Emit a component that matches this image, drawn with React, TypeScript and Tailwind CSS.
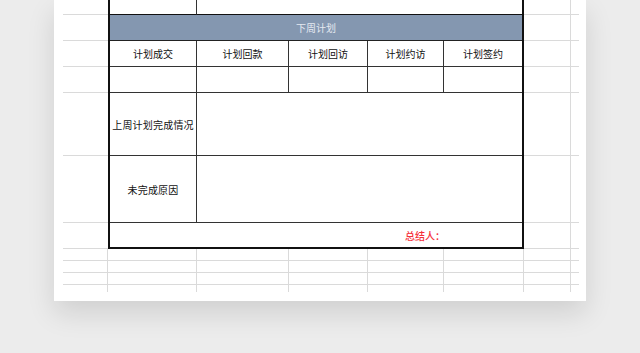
import React from "react";

// light spreadsheet gridlines around the report table
const gutterRows = [0, 1, 2, 3, 4, 5, 6];
const tailRows = [7, 8, 9, 10];

const headers = ["计划成交", "计划回款", "计划回访", "计划约访", "计划签约"];

function ReportTable() {
    return (
        <div className="col-start-2 col-span-5 row-start-1 row-span-7 border-x-2 border-b-2 border-[#111] grid grid-cols-[87px_92px_79px_76px_78px] grid-rows-[15px_26px_26px_26px_63px_67px_24px] text-[10px] text-[#111]">
            {/* top rows cut off by the viewport */}
            <div className="border-r border-b border-r-[#333] border-b-[#111]" />
            <div className="col-span-4 border-b border-[#111]" />

            <div className="col-span-5 bg-[#8497b0] border-b border-[#222] flex items-center justify-center text-[#e4e9f0]">
                下周计划
            </div>

            {headers.map((h, i) => (
                <div
                    key={h}
                    className={`flex items-center justify-center border-b border-[#333] ${i < 4 ? "border-r" : ""}`}
                >
                    {h}
                </div>
            ))}

            {headers.map((h, i) => (
                <div
                    key={h + "-v"}
                    className={`border-b border-[#333] ${i < 4 ? "border-r" : ""}`}
                />
            ))}

            <div className="flex items-center justify-center border-r border-b border-[#333] tracking-[0.2px]">
                上周计划完成情况
            </div>
            <div className="col-span-4 border-b border-[#333]" />

            <div className="flex items-center justify-center border-r border-b border-[#333] tracking-[0.2px]">
                未完成原因
            </div>
            <div className="col-span-4 border-b border-[#333]" />

            <div className="col-span-5 flex items-center justify-end pr-[77px] font-medium text-[#f5303a]">
                总结人：
            </div>
        </div>
    );
}

export default function App() {
    return (
        <div
            className="w-[640px] h-[353px] bg-[#ececec] overflow-hidden"
            style={{ fontFamily: '"Noto Sans CJK SC", "Noto Sans", sans-serif' }}
        >
            <div className="ml-[54px] w-[532px] h-[301px] bg-white shadow-[0_12px_26px_rgba(0,0,0,0.12)] pl-[9px]">
                <div className="grid grid-cols-[45px_89px_92px_79px_76px_80px_47px_8px] grid-rows-[15px_26px_26px_26px_63px_67px_26px_12px_12px_12px_7px]">
                    {gutterRows.map((r) => (
                        <React.Fragment key={r}>
                            <div
                                className="col-start-1 border-b border-[#dadada]"
                                style={{ gridRowStart: r + 1 }}
                            />
                            <div
                                className="col-start-7 border-b border-r border-[#dadada]"
                                style={{ gridRowStart: r + 1 }}
                            />
                            <div
                                className="col-start-8 border-b border-[#dadada]"
                                style={{ gridRowStart: r + 1 }}
                            />
                        </React.Fragment>
                    ))}

                    <ReportTable />

                    {tailRows.map((r) =>
                        [0, 1, 2, 3, 4, 5, 6, 7].map((c) => (
                            <div
                                key={`${r}-${c}`}
                                className={`border-[#dadada] ${r < 10 ? "border-b" : ""} ${c < 7 ? "border-r" : ""}`}
                                style={{ gridRowStart: r + 1, gridColumnStart: c + 1 }}
                            />
                        )),
                    )}
                </div>
            </div>
        </div>
    );
}
